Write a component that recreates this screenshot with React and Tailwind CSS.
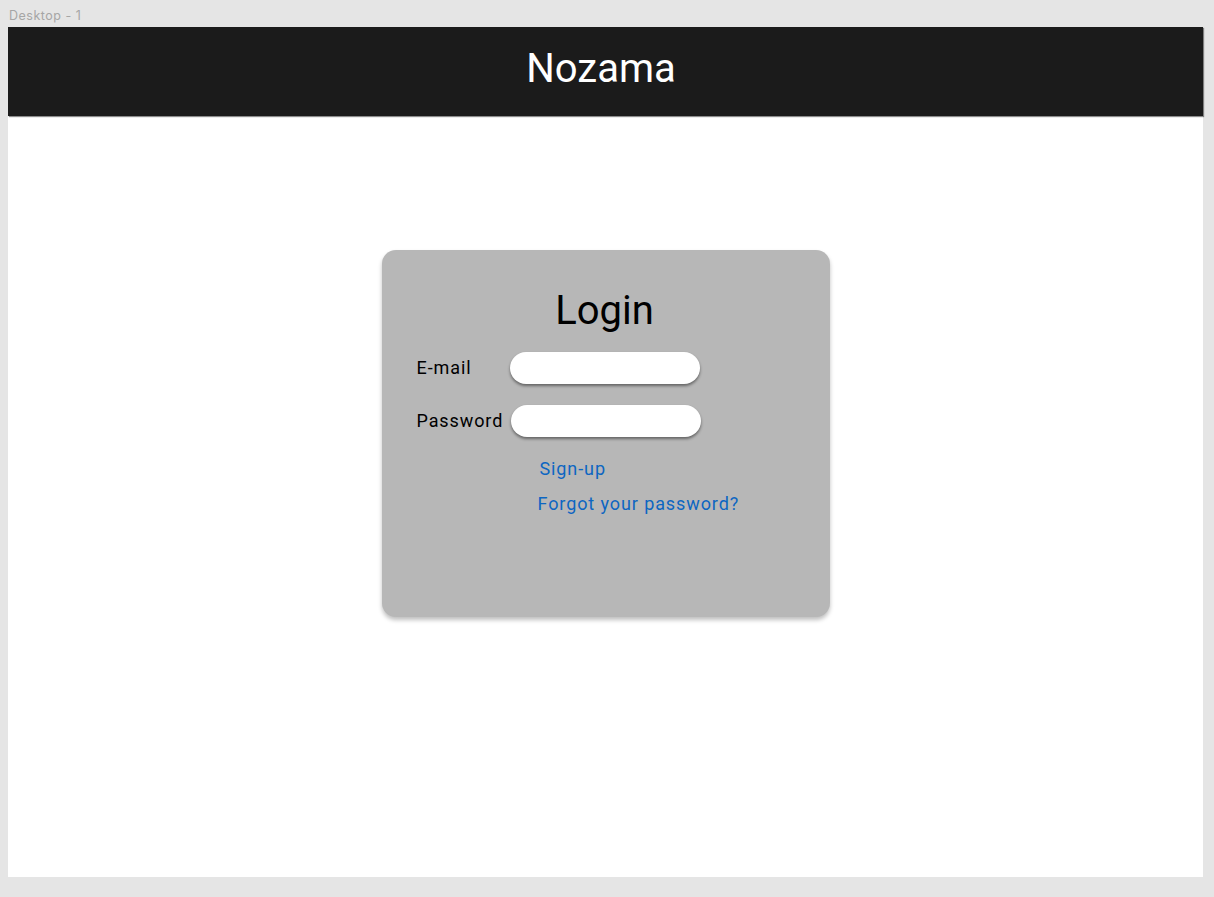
export default function App() {
  return (
    <div className="min-h-[897px] bg-[#e5e5e5] px-2 font-['Roboto',sans-serif]">
      <div className="h-[27px] pt-[9px] pl-px text-[12.5px] tracking-[0.5px] leading-[14px] text-[#a6a6a6] font-['Inter',sans-serif]">
        Desktop - 1
      </div>
      <div className="w-[1195px] h-[850px] bg-white">
        <header className="h-[89px] bg-[#1b1b1b] shadow-[1px_1px_1px_rgba(0,0,0,0.45)] flex items-center justify-center pr-[9px]">
          <h1 className="text-[40px] leading-none text-white pb-[6px]">Nozama</h1>
        </header>

        <div className="mt-[134px] mx-auto w-[448px] h-[367px] bg-[#b7b7b7] rounded-[14px] shadow-[0_3px_4px_rgba(0,0,0,0.25)] pt-[41px] px-[35px]">
          <h2 className="text-[40px] leading-none text-black text-center pr-[2px]">Login</h2>

          <div className="mt-[21px] flex items-center">
            <label className="w-[93px] text-[18px] tracking-[0.9px] leading-none text-black">E-mail</label>
            <input className="w-[190px] h-[32px] rounded-full bg-white shadow-[0_2px_3px_rgba(0,0,0,0.45)] outline-none px-3" />
          </div>
          <div className="mt-[21px] flex items-center">
            <label className="w-[94px] text-[18px] tracking-[0.9px] leading-none text-black whitespace-nowrap">Password</label>
            <input type="password" className="w-[190px] h-[32px] rounded-full bg-white shadow-[0_2px_3px_rgba(0,0,0,0.45)] outline-none px-3" />
          </div>

          <div className="mt-[21px] pl-[121px] flex flex-col items-start gap-[14px] text-[18px] tracking-[0.9px] leading-[21px] text-[#0d66c2]">
            <a href="#" className="ml-[2px]">Sign-up</a>
            <a href="#">Forgot your password?</a>
          </div>
        </div>
      </div>
    </div>
  );
}
